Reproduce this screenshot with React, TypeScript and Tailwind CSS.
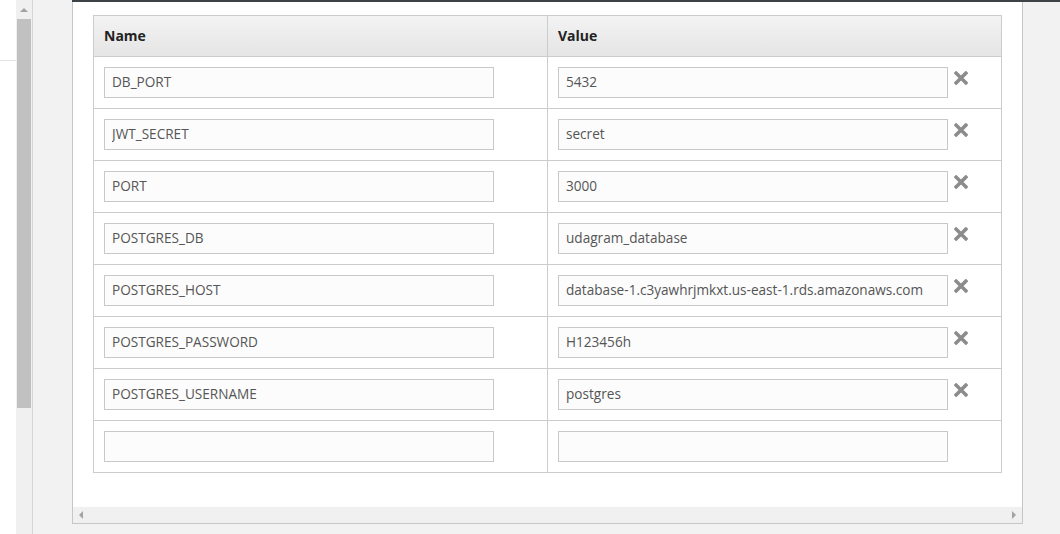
import React from "react";

interface EnvVar {
  name: string;
  value: string;
}

const VARS: EnvVar[] = [
  { name: "DB_PORT", value: "5432" },
  { name: "JWT_SECRET", value: "secret" },
  { name: "PORT", value: "3000" },
  { name: "POSTGRES_DB", value: "udagram_database" },
  { name: "POSTGRES_HOST", value: "database-1.c3yawhrjmkxt.us-east-1.rds.amazonaws.com" },
  { name: "POSTGRES_PASSWORD", value: "H123456h" },
  { name: "POSTGRES_USERNAME", value: "postgres" },
  { name: "", value: "" },
];

function Field({ value }: { value: string }) {
  return (
    <input
      readOnly
      value={value}
      className="w-[390px] h-[31px] px-[7px] pb-[2px] bg-[#fcfcfc] border border-[#c8c8c8] text-[13.6px] text-[#555] outline-none"
    />
  );
}

function RemoveIcon() {
  return (
    <svg width="14" height="14" viewBox="0 0 14 14" className="block">
      <path d="M2.2 2.2 L11.8 11.8 M11.8 2.2 L2.2 11.8" stroke="#8c8c8c" strokeWidth="3.6" strokeLinecap="square" />
    </svg>
  );
}

export default function App() {
  return (
    <div
      className="w-[1060px] h-[534px] flex bg-[#f2f2f2] overflow-hidden"
      style={{ fontFamily: "'Open Sans', 'Noto Sans', sans-serif" }}
    >
      {/* left edge */}
      <div className="w-[16px] bg-white flex flex-col">
        <div className="h-[61px] border-b border-[#e4e4e4]" />
      </div>
      {/* vertical scrollbar */}
      <div className="w-[17px] bg-[#f0f0f0] border-r border-[#d6d6d6] flex flex-col items-center">
        <div className="h-[19px] flex items-center justify-center">
          <div className="w-0 h-0 border-l-[4px] border-r-[4px] border-b-[4px] border-l-transparent border-r-transparent border-b-[#a3a3a3]" />
        </div>
        <div className="w-[14px] h-[389px] bg-[#c1c1c1]" />
      </div>
      <div className="w-[39px] bg-[#f2f2f2]" />

      {/* right side */}
      <div className="flex-1 flex flex-col">
        <div className="h-[2px] bg-[#3d4247]" />
        <div className="flex">
          <div className="w-[951px] h-[522px] bg-white border-l border-r border-b border-[#c6c6c6] flex flex-col">
            <div className="flex-1 pl-[20px] pt-[13px]">
              <div className="w-[909px] border border-[#cccccc]">
                <div className="flex h-[41px] bg-gradient-to-b from-[#f3f3f3] to-[#e5e5e5] border-b border-[#cccccc] text-[14px] font-bold text-[#222]">
                  <div className="w-[454px] border-r border-[#cccccc] px-[10px] pb-[2px] flex items-center">Name</div>
                  <div className="flex-1 px-[10px] pb-[2px] flex items-center">Value</div>
                </div>
                {VARS.map((v, i) => (
                  <div
                    key={i}
                    className={`flex ${i < VARS.length - 1 ? "h-[52px] border-b border-[#cccccc]" : "h-[51px]"}`}
                  >
                    <div className="w-[454px] border-r border-[#cccccc] pl-[10px] pt-[10px]">
                      <Field value={v.name} />
                    </div>
                    <div className="flex-1 pl-[10px] pt-[10px] flex items-start gap-[6px]">
                      <Field value={v.value} />
                      {v.name && (
                        <div className="pt-[4px]">
                          <RemoveIcon />
                        </div>
                      )}
                    </div>
                  </div>
                ))}
              </div>
            </div>
            {/* horizontal scrollbar */}
            <div className="h-[16px] bg-[#f0f0f0] flex items-center justify-between px-[6px]">
              <div className="w-0 h-0 border-t-[4px] border-b-[4px] border-r-[4px] border-t-transparent border-b-transparent border-r-[#a3a3a3]" />
              <div className="w-0 h-0 border-t-[4px] border-b-[4px] border-l-[4px] border-t-transparent border-b-transparent border-l-[#a3a3a3]" />
            </div>
          </div>
          <div className="flex-1" />
        </div>
      </div>
    </div>
  );
}
